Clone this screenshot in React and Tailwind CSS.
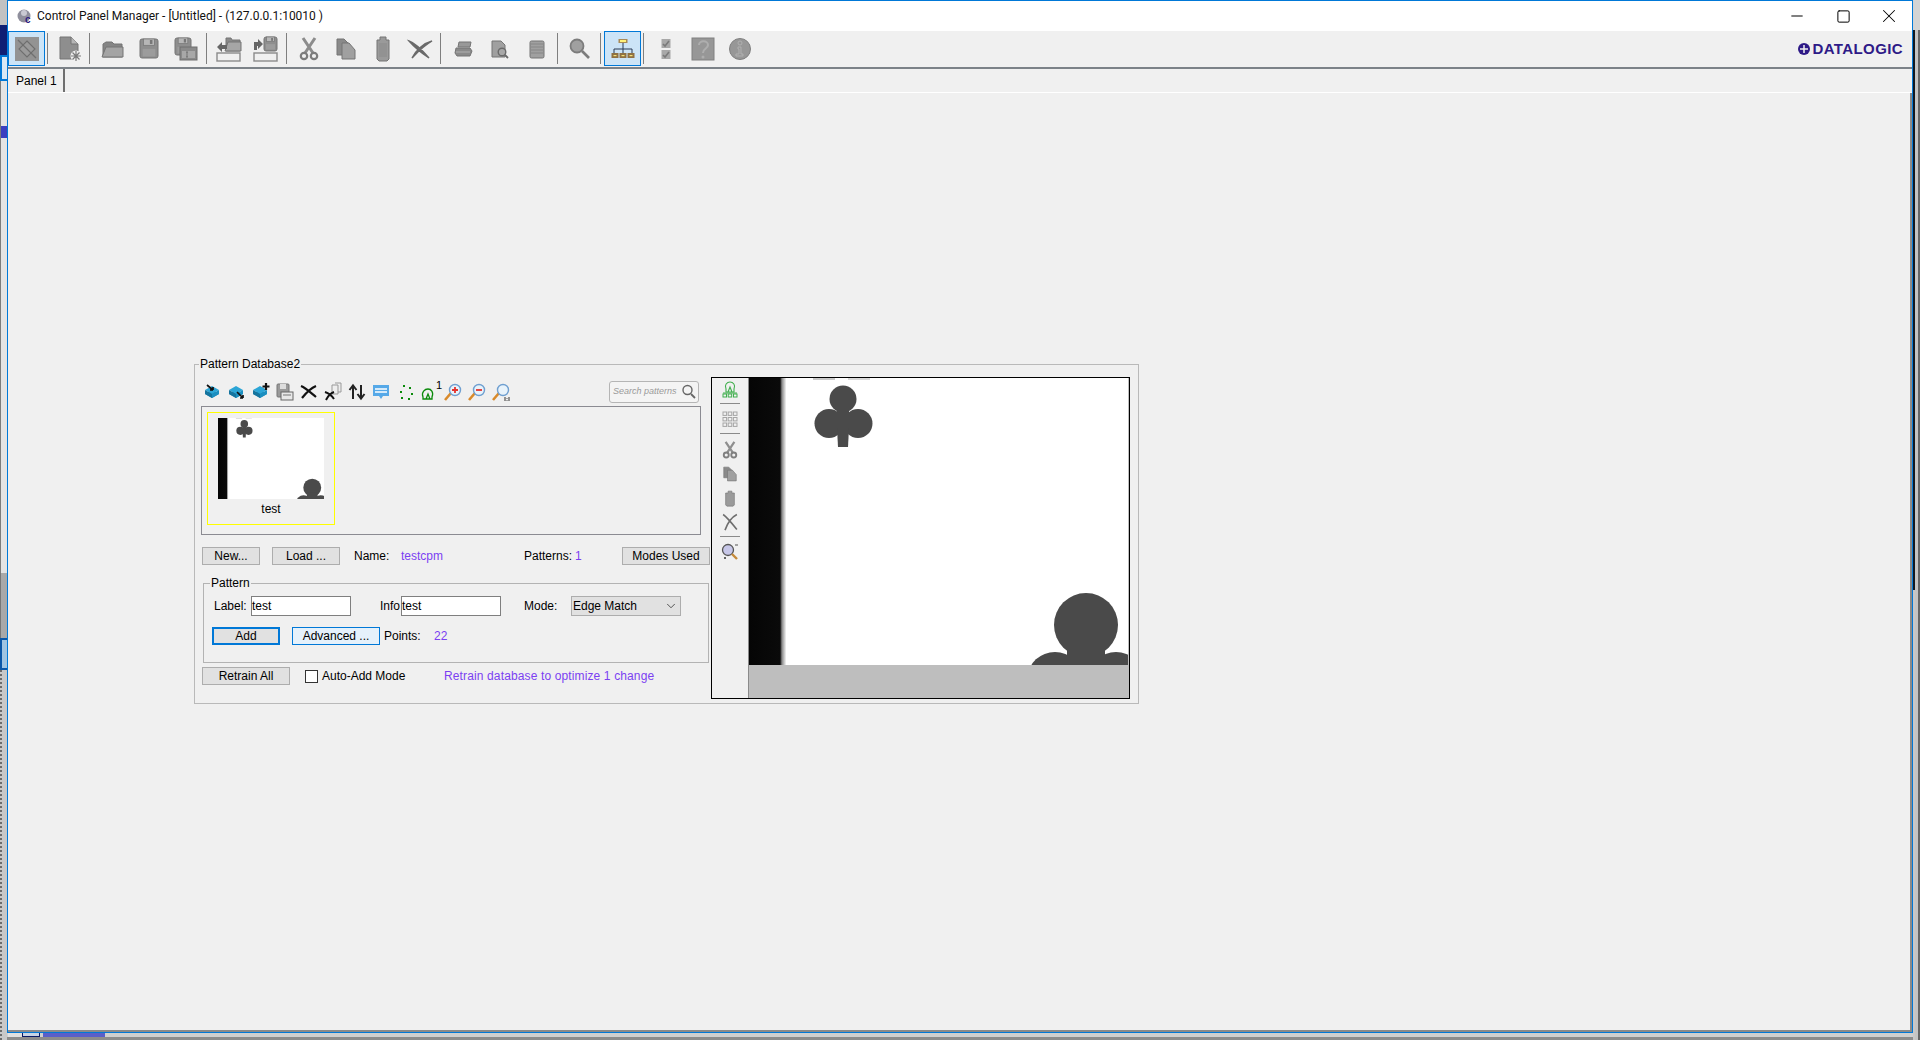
import React from 'react';
import { ChevronDown, Minus, Square, X } from 'lucide-react';

const G = '#8e8e8e';
const D = '#757575';

function Ico({ size = 32, vb = 32, children }) {
  return (
    <svg width={size} height={size} viewBox={`0 0 ${vb} ${vb}`} className="block">
      {children}
    </svg>
  );
}

const DisconnectIcon = () => (
  <Ico>
    <rect x="4" y="4" width="24" height="24" fill="#939393" />
    <path d="M7 7 L12 12 M20 20 L25 25" stroke="#707070" strokeWidth="1.3" />
    <path d="M16 8 L24 16 L16 24 L8 16 Z" fill="#9a9a9a" stroke="#6e6e6e" strokeWidth="1.1" />
    <path d="M12 12 L20 20" stroke="#6e6e6e" strokeWidth="1.1" />
  </Ico>
);
const NewIcon = () => (
  <Ico>
    <path d="M6 4 H17 L24 11 V26 H6 Z" fill={G} stroke={D} />
    <path d="M17 4 V11 H24" fill="#b5b5b5" stroke={D} />
    <circle cx="22" cy="23" r="5.5" fill="#f0f0f0" />
    <path d="M22 18 V28 M17 23 H27 M18.5 19.5 L25.5 26.5 M25.5 19.5 L18.5 26.5" stroke="#7a7a7a" strokeWidth="1.2" />
  </Ico>
);
const FolderIcon = () => (
  <Ico>
    <path d="M7 11 L10 9 H16 L18 11 H26 V24 H7 Z" fill="#858585" stroke={D} />
    <path d="M6 24 L10 14 H27 V24 Z" fill="#a4a4a4" stroke={D} />
  </Ico>
);
const Floppy = ({ x = 7, y = 6, s = 18 }) => (
  <g>
    <rect x={x} y={y} width={s} height={s + 1} rx="2" fill={G} stroke={D} />
    <rect x={x + s * 0.2} y={y} width={s * 0.6} height={s * 0.35} fill="#b7b7b7" stroke={D} strokeWidth="0.7" />
    <rect x={x + s * 0.55} y={y + 1} width={s * 0.14} height={s * 0.22} fill="#777" />
    <rect x={x + s * 0.15} y={y + s * 0.55} width={s * 0.7} height={s * 0.42} fill="#9c9c9c" />
  </g>
);
const FloppyIcon = () => (
  <Ico>
    <Floppy />
  </Ico>
);
const SaveAsIcon = () => (
  <Ico>
    <Floppy x={5} y={5} s={16} />
    <rect x="10" y="14" width="17" height="13" fill="#8a8a8a" stroke="#6e6e6e" />
    <rect x="12" y="18" width="13" height="7" fill="#a8a8a8" />
    <path d="M17 19 V24 M16 19 H18 M16 24 H18" stroke="#666" strokeWidth="0.8" />
  </Ico>
);
const BoxBelow = () => <rect x="4" y="20" width="23" height="8" fill="none" stroke="#8a8a8a" strokeWidth="1.4" />;
const ImportIcon = () => (
  <Ico>
    <path d="M13 5 H18 L19 7 H27 V18 H13 Z" fill="#8a8a8a" stroke={D} />
    <path d="M12 18 L15 9 H28 V18 Z" fill="#a6a6a6" stroke={D} />
    <path d="M4 14 L9 9 V12 H14 V16 H9 V19 Z" fill="#666" />
    <BoxBelow />
  </Ico>
);
const ExportIcon = () => (
  <Ico>
    <Floppy x={14} y={4} s={13} />
    <path d="M13 11 L8 6 V9 H4 V17 H7 V13 H8 V16 Z" fill="#666" />
    <BoxBelow />
  </Ico>
);
const ScissorsIcon = () => (
  <Ico>
    <path d="M10 5 L20 20 M22 5 L12 20" stroke="#8c8c8c" strokeWidth="3" />
    <circle cx="11" cy="23" r="3.2" fill="none" stroke="#7c7c7c" strokeWidth="2.2" />
    <circle cx="21" cy="23" r="3.2" fill="none" stroke="#7c7c7c" strokeWidth="2.2" />
  </Ico>
);
const CopyIcon = () => (
  <Ico>
    <path d="M7 6 H14 L18 10 V22 H7 Z" fill="#8a8a8a" stroke={D} />
    <path d="M12 10 H19 L25 17 V26 H12 Z" fill="#a0a0a0" stroke={D} />
  </Ico>
);
const PasteIcon = () => (
  <Ico>
    <path d="M10 7 H13 V4 H19 V7 H22 V26 L20 28 H12 L10 26 Z" fill="#9a9a9a" stroke={D} />
    <rect x="12" y="10" width="8" height="14" fill="#929292" />
  </Ico>
);
const DeleteIcon = () => (
  <Ico>
    <path d="M5 8 C11 10 18 17 25 25 C19 21 12 16 5 8 Z M28 8 C20 10 12 17 8 25 C12 21 18 14 28 8 Z" fill="#6a6a6a" stroke="#6a6a6a" strokeWidth="1.4" />
  </Ico>
);
const PrinterIcon = () => (
  <Ico>
    <path d="M12 9 H24 L23 14 H11 Z" fill="#999" stroke={D} />
    <path d="M9 15 H23 L25 18 L23 23 H10 L8 20 Z" fill="#8a8a8a" stroke={D} />
    <path d="M9 19 H23" stroke="#b0b0b0" />
  </Ico>
);
const PreviewIcon = () => (
  <Ico>
    <path d="M8 8 H17 L21 12 V24 H8 Z" fill="#a0a0a0" stroke={D} />
    <circle cx="18" cy="19" r="3.8" fill="#a8a8a8" stroke="#6a6a6a" strokeWidth="1.4" />
    <path d="M21 22 L24 25" stroke="#6a6a6a" strokeWidth="1.8" />
  </Ico>
);
const NotepadIcon = () => (
  <Ico>
    <rect x="9" y="8" width="14" height="17" rx="1.5" fill="#a0a0a0" stroke={D} />
    <path d="M10 11 H22 M10 14 H22 M10 17 H22 M10 20 H22" stroke="#868686" />
  </Ico>
);
const MagnifierIcon = () => (
  <Ico>
    <circle cx="13" cy="13" r="6.5" fill="#a0a0a0" stroke="#7c7c7c" strokeWidth="1.8" />
    <path d="M18 18 L25 25" stroke="#7c7c7c" strokeWidth="2.6" />
  </Ico>
);
const HierarchyIcon = () => (
  <Ico>
    <rect x="11.5" y="6" width="9" height="4" fill="#a98a55" />
    <rect x="13" y="7" width="6" height="2" fill="#fff27a" />
    <path d="M16 10 V20 M7 20 V16 H25 V20" stroke="#2a3a55" strokeWidth="1" fill="none" />
    {[4.5, 12.5, 20.5].map((x) => (
      <g key={x}>
        <rect x={x} y="20" width="7" height="5" fill="#8f7142" />
        <rect x={x + 2} y="22" width="3" height="1.2" fill="#f5e27a" />
      </g>
    ))}
  </Ico>
);
const ChecksIcon = () => (
  <Ico>
    <rect x="11.5" y="6" width="9" height="9" fill="#a8a8a8" />
    <rect x="11.5" y="17" width="9" height="9" fill="#a8a8a8" />
    <path d="M13 11 L15 13 L19 8 M13 22 L15 24 L19 19" stroke="#7a7a7a" strokeWidth="1.6" fill="none" />
  </Ico>
);
const HelpIcon = () => (
  <Ico>
    <rect x="5" y="5" width="22" height="22" fill="#979797" stroke="#808080" />
    <path d="M12 12 C12 7 21 7 21 12 C21 16 16 15 16 20" fill="none" stroke="#aeaeae" strokeWidth="2" />
    <circle cx="16" cy="24" r="1.5" fill="#aeaeae" />
  </Ico>
);
const InfoIcon = () => (
  <Ico>
    <circle cx="16" cy="16" r="10.5" fill="#979797" stroke="#808080" />
    <circle cx="16" cy="10" r="2" fill="none" stroke="#b0b0b0" />
    <path d="M14 14 H17 V21 H19 V23 H12 V21 H15 V16 H14 Z" fill="none" stroke="#b0b0b0" />
  </Ico>
);

const toolbar = [
  [DisconnectIcon, true], 'sep',
  [NewIcon], 'tight',
  [FolderIcon], [FloppyIcon], [SaveAsIcon], 'sep',
  [ImportIcon], [ExportIcon], 'sep',
  [ScissorsIcon], [CopyIcon], [PasteIcon], [DeleteIcon], 'sep',
  [PrinterIcon], [PreviewIcon], [NotepadIcon], 'sep',
  [MagnifierIcon], 'sep',
  [HierarchyIcon, true], 'sep',
  [ChecksIcon], [HelpIcon], [InfoIcon],
];

function Layers({ children }) {
  return (
    <Ico size={20} vb={20}>
      <path d="M2 12 L9 8 L16 12 L9 16 Z" fill="#1a86b5" />
      <path d="M2 8 L9 4 L16 8 L9 12 Z" fill="#2ba5d6" />
      <path d="M2 8 V12 L9 16 V12 Z" fill="#15749e" />
      <path d="M16 8 V12 L9 16 V12 Z" fill="#1b8fc0" />
      {children}
    </Ico>
  );
}

const smallTools = [
  <Layers key="a"><path d="M4 3 L10 8 M10 8 V5 M10 8 H7" stroke="#111" strokeWidth="1.7" fill="none" /></Layers>,
  <Layers key="b"><path d="M10 10 L16 16 M16 16 V13 M16 16 H13" stroke="#111" strokeWidth="1.7" fill="none" /></Layers>,
  <Layers key="c"><path d="M15 1 V8 M11.5 4.5 H18.5" stroke="#111" strokeWidth="2.2" /></Layers>,
  <Ico key="d" size={20} vb={20}>
    <rect x="2" y="2" width="12" height="13" rx="1" fill="#9a9a9a" stroke="#777" />
    <rect x="5" y="2" width="6" height="5" fill="#ddd" />
    <rect x="6" y="10" width="12" height="8" fill="#e8e8e8" stroke="#666" />
    <path d="M8 13 H16" stroke="#777" />
  </Ico>,
  <Ico key="e" size={20} vb={20}>
    <path d="M2 4 C7 6 12 11 17 15 M17 4 C12 6 7 11 3 16" stroke="#111" strokeWidth="2.2" fill="none" />
  </Ico>,
  <Ico key="f" size={20} vb={20}>
    <path d="M9 3 H15 V12 H9 Z M12 1 H18 V10 H15" fill="#eee" stroke="#999" />
    <path d="M2 10 C5 11 9 14 11 17 M11 10 C8 11 5 14 3 18" stroke="#111" strokeWidth="2" fill="none" />
  </Ico>,
  <Ico key="g" size={20} vb={20}>
    <path d="M6 17 V4 M2.5 8 L6 3.5 L9.5 8 M14 3 V16 M10.5 12 L14 16.5 L17.5 12" stroke="#222" strokeWidth="2" fill="none" />
  </Ico>,
  <Ico key="h" size={20} vb={20}>
    <path d="M2 3 H18 V14 H12 L10 17 L8 14 H2 Z" fill="#56a9e8" />
    <path d="M4 7 H16 M4 10 H16" stroke="#fff" strokeWidth="1.3" />
  </Ico>,
  <Ico key="i" size={20} vb={20}>
    {[[8, 3], [14, 5], [5, 9], [16, 11], [6, 15], [13, 16]].map(([x, y]) => (
      <rect key={`${x}-${y}`} x={x} y={y} width="2" height="2" fill="#0a8a0a" />
    ))}
  </Ico>,
  <div key="j" className="relative h-5 w-5">
    <Ico size={20} vb={20}>
      <path d="M4 17 V15 C2 10 6 7 9 7 C12 7 15 10 13 15 V17 Z M7 17 L9 12 L11 17 Z" fill="none" stroke="#0a8a0a" strokeWidth="1.3" />
    </Ico>
    <span className="absolute -right-[3px] -top-[2px] text-[11px] leading-none text-black">1</span>
  </div>,
  ...['plus', 'minus', 'one'].map((k) => (
    <Ico key={k} size={20} vb={20}>
      <path d="M2 18 L8 11" stroke="#d98a2b" strokeWidth="2.6" />
      <circle cx="12" cy="8" r="5.5" fill="#e8f3fb" stroke="#6f9fd0" strokeWidth="1.4" />
      {k === 'plus' && <path d="M9 8 H15 M12 5 V11" stroke="#e5322d" strokeWidth="1.8" />}
      {k === 'minus' && <path d="M9 8 H15" stroke="#e5322d" strokeWidth="1.8" />}
      {k === 'one' && <path d="M14 15 V19 M18 15 V19 M16 16 V16.8 M16 18 V18.8" stroke="#333" strokeWidth="1" />}
    </Ico>
  )),
];

// card image, drawn in the 379x287 space of the big preview
function CardImage({ className, id }) {
  return (
    <svg viewBox="0 0 379 287" preserveAspectRatio="none" className={className}>
      <defs>
        <linearGradient id={id} x1="0" x2="1" y1="0" y2="0">
          <stop offset="0" stopColor="#050505" />
          <stop offset="0.84" stopColor="#0a0a0a" />
          <stop offset="0.89" stopColor="#888" />
          <stop offset="1" stopColor="#f4f4f4" />
        </linearGradient>
      </defs>
      <rect width="379" height="287" fill="#ffffff" />
      <rect width="37" height="287" fill={`url(#${id})`} />
      <g fill="#4a4a4a" className="blur-[0.7px]">
        <circle cx="94" cy="21" r="13.5" />
        <circle cx="80" cy="45.5" r="14.5" />
        <circle cx="109" cy="45.5" r="14.5" />
        <path d="M88 28 H100 V50 L99 69 H89 L88 50 Z" />
        <circle cx="337" cy="247" r="32" />
        <ellipse cx="306" cy="299" rx="27" ry="25" />
        <ellipse cx="367" cy="299" rx="27" ry="25" />
        <rect x="318" y="265" width="38" height="22" />
      </g>
      <rect x="64" y="0" width="22" height="2" fill="#c9c9c9" />
      <rect x="99" y="0" width="22" height="2" fill="#d9d9d9" />
    </svg>
  );
}

function Btn({ className = '', tone = 'border border-[#adadad] bg-[#e1e1e1]', children }) {
  return (
    <div className={`flex h-[18px] items-center justify-center ${tone} ${className}`}>
      {children}
    </div>
  );
}

function PreviewTools() {
  return (
    <div className="flex w-[36px] flex-col items-center pt-[1px]">
      <Ico size={20} vb={20}>
        <path d="M6 13 V10 C4 6 7 3 10 3 C13 3 16 6 14 10 V13 Z M8 13 L10 8 L12 13 Z" fill="none" stroke="#3fae4c" strokeWidth="1.1" />
        <path d="M3 14 H17" stroke="#3fae4c" />
        <rect x="3" y="15" width="3.5" height="3" fill="none" stroke="#3fae4c" />
        <rect x="8.2" y="15" width="3.5" height="3" fill="none" stroke="#3fae4c" />
        <rect x="13.5" y="15" width="3.5" height="3" fill="none" stroke="#3fae4c" />
      </Ico>
      <div className="mt-[4px] h-px w-5 bg-[#8a8a8a]" />
      <div className="mt-[5px]">
        <Ico size={20} vb={20}>
          {[3, 8.5, 14].map((y) => [3, 8.2, 13.4].map((x) => (
            <rect key={`${x}-${y}`} x={x} y={y} width="3.6" height="3.4" fill="none" stroke="#a5a5a5" />
          )))}
        </Ico>
      </div>
      <div className="mt-[4px] h-px w-5 bg-[#8a8a8a]" />
      <div className="mt-[6px] flex flex-col gap-[4px]">
        <Ico size={20} vb={32}><path d="M9 3 L21 21 M23 3 L11 21" stroke="#8f8f8f" strokeWidth="3.6" /><circle cx="10" cy="24" r="4" fill="none" stroke="#7f7f7f" strokeWidth="3" /><circle cx="22" cy="24" r="4" fill="none" stroke="#7f7f7f" strokeWidth="3" /></Ico>
        <Ico size={20} vb={32}><path d="M6 5 H14 L19 10 V22 H6 Z" fill="#8a8a8a" stroke={D} /><path d="M12 10 H20 L26 17 V27 H12 Z" fill="#a0a0a0" stroke={D} /></Ico>
        <Ico size={20} vb={32}><path d="M9 8 L13 8 V5 H19 V8 L23 8 V27 L21 29 H11 L9 27 Z" fill="#9a9a9a" stroke={D} /></Ico>
        <Ico size={20} vb={32}><path d="M5 4 C11 8 19 18 27 28 M27 4 C19 8 12 18 8 29" fill="none" stroke="#6e6e6e" strokeWidth="2.6" /></Ico>
      </div>
      <div className="mt-[4px] h-px w-5 bg-[#8a8a8a]" />
      <div className="mt-[5px]">
        <Ico size={20} vb={20}>
          <circle cx="8" cy="8" r="5.5" fill="#c7c7e8" stroke="#555" strokeWidth="1.3" />
          <path d="M12 12 L17 17" stroke="#c58a3a" strokeWidth="2.4" />
          <path d="M15 3 H18" stroke="#555" />
          <path d="M4 16 H6 M5 15 V17" stroke="#333" />
        </Ico>
      </div>
    </div>
  );
}

export default function App() {
  return (
    <div className="flex h-[1040px] w-[1920px] overflow-hidden bg-[#c8c8c8] font-['Liberation_Sans',sans-serif] text-[12px] text-black">
      {/* bits of other windows peeking out behind the main one */}
      <div className="flex h-[1040px] w-[7px] flex-col bg-[#d0d0d0]">
        <div className="h-[25px] bg-[#c2c2c2]" />
        <div className="h-[30px] bg-[#0f1f74]" />
        <div className="h-[26px] border-2 border-r-0 border-[#0078d7] bg-[#d7e8f5]" />
        <div className="h-[492px] border-l border-[#7c7c7c] bg-[#e4e4e4]">
          <div className="mt-[45px] h-[12px] bg-[#3c3fc0]" />
        </div>
        <div className="h-[65px] border-l border-[#777] bg-[#a9a9a9]" />
        <div className="h-[32px] border-2 border-r-0 border-[#0b57a8] bg-[#9fc4e2]" />
        <div className="flex-1 border-l-2 border-dotted border-[#6b6b6b] bg-[#c8c8c8]" />
      </div>

      <div className="flex h-[1040px] w-[1906px] flex-col">
        <div className="flex h-[1033px] flex-col border border-[#0078d7] bg-[#f0f0f0]">
          <div className="flex h-[30px] items-center bg-white">
            <div className="ml-[9px] mr-[4px] w-[16px]">
              <Ico size={16} vb={16}>
                <circle cx="7" cy="8" r="6.5" fill="#8f8f9c" />
                <circle cx="7" cy="5" r="3" fill="#c9c9d2" />
                <text x="8" y="15" fontSize="10" fontWeight="700" fill="#2b1a80" fontFamily="Liberation Sans">c</text>
              </Ico>
            </div>
            <span className="font-['Roboto',sans-serif] text-[12px] text-[#111]">Control Panel Manager - [Untitled] - (127.0.0.1:10010 )</span>
            <div className="ml-auto flex items-center">
              <div className="flex w-[46px] justify-center"><Minus size={18} strokeWidth={1.33} /></div>
              <div className="flex w-[46px] justify-center"><Square size={15} strokeWidth={1.6} /></div>
              <div className="flex w-[46px] justify-center"><X size={22} strokeWidth={1.1} /></div>
            </div>
          </div>

          <div className="flex h-[38px] items-center border-b-2 border-[#7c8288] pb-px">
            {toolbar.map((t, i) => {
              if (t === 'sep') return <div key={i} className="ml-[2px] mr-[3px] h-[31px] w-px bg-[#7f7f7f]" />;
              if (t === 'tight') return <div key={i} className="ml-[1px] mr-[3px] h-[31px] w-px bg-[#7f7f7f]" />;
              const [Icon, on] = t;
              return (
                <div
                  key={i}
                  className={`flex h-[35px] w-[37px] items-center justify-center ${on ? 'border border-[#0078d7] bg-[#cce4f7]' : ''}`}
                >
                  <Icon />
                </div>
              );
            })}
            <div className="ml-auto mr-[9px] flex items-center gap-[2px] text-[#2e1a87]">
              <svg width="12" height="12" viewBox="0 0 12 12" className="block">
                <circle cx="6" cy="6" r="6" fill="#2e1a87" />
                <path d="M6 2 V10 M2 6 H10" stroke="#f0f0f0" strokeWidth="1.5" />
              </svg>
              <span className="text-[15px] font-bold leading-none tracking-[0.4px]">DATALOGIC</span>
            </div>
          </div>

          <div className="flex h-[24px] border-b border-white">
            <div className="flex w-[57px] items-center border-r-2 border-[#6f6f6f] pl-[8px] pt-px text-[12px]">Panel 1</div>
          </div>

          <div className="flex-1 border-b-2 border-r-2 border-[#8a8a8a] pl-[186px] pt-[264px]">
            <fieldset className="h-[347px] w-[945px] border border-[#b9b9b9] px-[6px]">
              <legend className="ml-[-2px] px-[1px] leading-[14px]">Pattern Database2</legend>
              <div className="flex pt-[6px]">
                <div className="w-[510px]">
                  <div className="flex h-[29px] w-[500px] items-center">
                    <div className="ml-[2px] flex gap-[4px]">{smallTools}</div>
                    <div className="ml-auto mr-[2px] flex h-[22px] w-[90px] items-center justify-between rounded-[3px] border border-[#b5b5b5] bg-[#f4f4f4] pl-[3px] pr-[2px]">
                      <span className="text-[9px] italic text-[#9a9a9a]">Search patterns</span>
                      <svg width="15" height="15" viewBox="0 0 15 15">
                        <circle cx="6.5" cy="6" r="4.5" fill="none" stroke="#666" strokeWidth="1.4" />
                        <path d="M10 10 L14 14" stroke="#666" strokeWidth="1.8" />
                      </svg>
                    </div>
                  </div>

                  <div className="h-[129px] w-[500px] border border-[#8b8b92] p-[5px]">
                    <div className="flex h-[113px] w-[128px] flex-col items-center border border-[#ffff00] pt-[5px]">
                      <CardImage id="thumb-edge" className="h-[81px] w-[106px]" />
                      <div className="mt-[3px] leading-[14px]">test</div>
                    </div>
                  </div>

                  <div className="mt-[12px] flex h-[18px] items-center">
                    <Btn className="ml-px w-[58px]">New...</Btn>
                    <Btn className="ml-[12px] w-[68px]">Load ...</Btn>
                    <span className="ml-[14px] w-[47px]">Name:</span>
                    <span className="w-[123px] text-[#7b3ff2]">testcpm</span>
                    <span className="w-[51px]">Patterns:</span>
                    <span className="w-[47px] text-[#7b3ff2]">1</span>
                    <Btn className="w-[88px]">Modes Used</Btn>
                  </div>

                  <fieldset className="ml-[2px] mt-[11px] h-[87px] w-[506px] border border-[#b3b3b3] pl-[7px]">
                    <legend className="ml-[-1px] px-[1px] leading-[14px]">Pattern</legend>
                    <div className="mt-[6px] flex h-[20px] items-center">
                      <span className="ml-[3px] w-[37px]">Label:</span>
                      <div className="flex h-[20px] w-[100px] items-center border border-[#7f7f7f] bg-white">test</div>
                      <span className="ml-[29px] w-[21px]">Info</span>
                      <div className="flex h-[20px] w-[100px] items-center border border-[#7f7f7f] bg-white">test</div>
                      <span className="ml-[23px] w-[47px]">Mode:</span>
                      <div className="flex h-[20px] w-[110px] items-center justify-between border border-[#adadad] bg-[#e1e1e1] pl-[1px] pr-[2px]">
                        <span>Edge Match</span>
                        <ChevronDown size={14} strokeWidth={1.4} className="text-[#333]" />
                      </div>
                    </div>
                    <div className="mt-[11px] flex h-[18px] items-center">
                      <Btn tone="border-2 border-[#0078d7] bg-[#e1e1e1]" className="ml-px w-[68px]">Add</Btn>
                      <Btn tone="border border-[#0078d7] bg-[#e5f1fb]" className="ml-[12px] w-[88px]">Advanced ...</Btn>
                      <span className="ml-[4px] w-[50px]">Points:</span>
                      <span className="text-[#7b3ff2]">22</span>
                    </div>
                  </fieldset>

                  <div className="mt-[4px] flex h-[18px] items-center">
                    <Btn className="ml-px w-[88px]">Retrain All</Btn>
                    <div className="ml-[15px] h-[13px] w-[13px] border border-[#333] bg-white" />
                    <span className="ml-[4px] w-[122px]">Auto-Add Mode</span>
                    <span className="tracking-[0.13px] text-[#7b3ff2]">Retrain database to optimize 1 change</span>
                  </div>
                </div>

                <div className="flex h-[322px] w-[419px] border border-black">
                  <PreviewTools />
                  <div className="flex flex-1 flex-col border-l border-[#8a8a8a] bg-[#bebebe]">
                    <CardImage id="big-edge" className="h-[287px] w-[379px]" />
                  </div>
                </div>
              </div>
            </fieldset>
          </div>
        </div>

        {/* task bar edge under the window */}
        <div className="flex h-[4px] bg-[#cfcfcf]">
          <div className="ml-[1px] w-[14px] bg-[#e0e0e0]" />
          <div className="w-[18px] border-b border-x border-[#0a1a66] bg-[#c8d4e6]" />
          <div className="ml-[3px] w-[62px] bg-[#5a5fc8]" />
        </div>
        <div className="h-[3px] bg-[#8c8c8c]" />
      </div>

      <div className="flex h-[1040px] w-[7px] flex-col">
        <div className="h-[30px] bg-[#d4d4d4]" />
        <div className="flex flex-1">
          <div className="h-[560px] w-[2px] bg-[#101820]" />
          <div className="flex-1 bg-[#c4c4c4]" />
          <div className="w-[2px] bg-[#666]" />
        </div>
      </div>
    </div>
  );
}
